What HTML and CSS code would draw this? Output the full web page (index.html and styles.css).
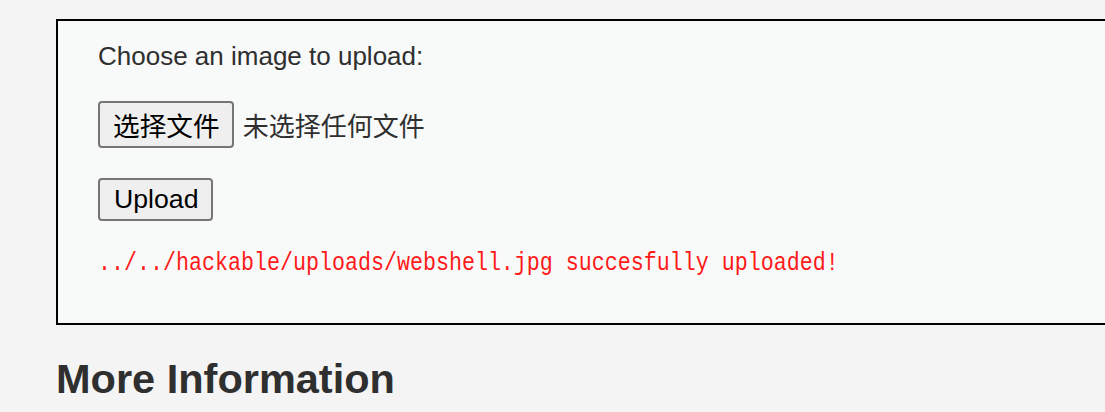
FILE: index.html
```html
<!DOCTYPE html>
<html>
<head>
<meta charset="utf-8">
<link rel="stylesheet" href="styles.css">
</head>
<body>
<div class="page">
  <div class="vuln-box">
    <form class="upload-form">
      <div class="prompt">Choose an image to upload:</div>
      <div class="file-row">
        <button type="button" class="btn btn-file">选择文件</button>
        <span class="file-status">未选择任何文件</span>
      </div>
      <div class="submit-row">
        <button type="button" class="btn btn-submit">Upload</button>
      </div>
      <pre class="result"><span class="result-text">../../hackable/uploads/webshell.jpg succesfully uploaded!</span></pre>
    </form>
  </div>
  <h2 class="section-title">More Information</h2>
</div>
</body>
</html>
```

FILE: styles.css
```css
html, body {
  margin: 0;
  padding: 0;
}

body {
  background: #f4f4f4;
  color: #2f2f2f;
  font-family: "Liberation Sans", Arial, sans-serif;
  overflow: hidden;
  height: 412px;
}

.page {
  padding: 19px 0 0 56px;
}

.vuln-box {
  border: 2px solid #000;
  border-right: none;
  background: #f8f9f9;
  padding: 20px 0 45px 40px;
}

.upload-form {
  display: flex;
  flex-direction: column;
  align-items: flex-start;
  margin: 0;
}

.prompt {
  font-size: 26px;
  line-height: 30px;
}

.file-row {
  margin-top: 30px;
  display: flex;
  align-items: center;
  gap: 9px;
  height: 47px;
}

.btn {
  box-sizing: border-box;
  background: #efefef;
  border: 2px solid #767676;
  border-radius: 4px;
  color: #000;
  font-size: 26.67px;
  margin: 0;
}

.btn-file {
  font-family: "Noto Sans CJK SC", sans-serif;
  height: 47px;
  line-height: 38px;
  padding: 0 12px 0 13px;
}

.file-status {
  font-family: "Noto Sans CJK SC", sans-serif;
  font-size: 26px;
  line-height: 38px;
  color: #2f2f2f;
}

.submit-row {
  margin-top: 30px;
  display: flex;
}

.btn-submit {
  font-family: "Liberation Sans", Arial, sans-serif;
  height: 43px;
  line-height: 35px;
  padding: 0 13px 0 14px;
}

.result {
  margin: 31px 0 0 0;
  font-family: "Liberation Mono", "Courier New", monospace;
  font-size: 21.67px;
  line-height: 26px;
  color: #ff1a1a;
}

.result-text {
  display: inline-block;
  transform: scaleY(1.15);
  transform-origin: 0 19px;
}

.section-title {
  margin: 30px 0 0 0;
  font-size: 41.5px;
  line-height: 48px;
  font-weight: bold;
  color: #2f2f2f;
}
```
